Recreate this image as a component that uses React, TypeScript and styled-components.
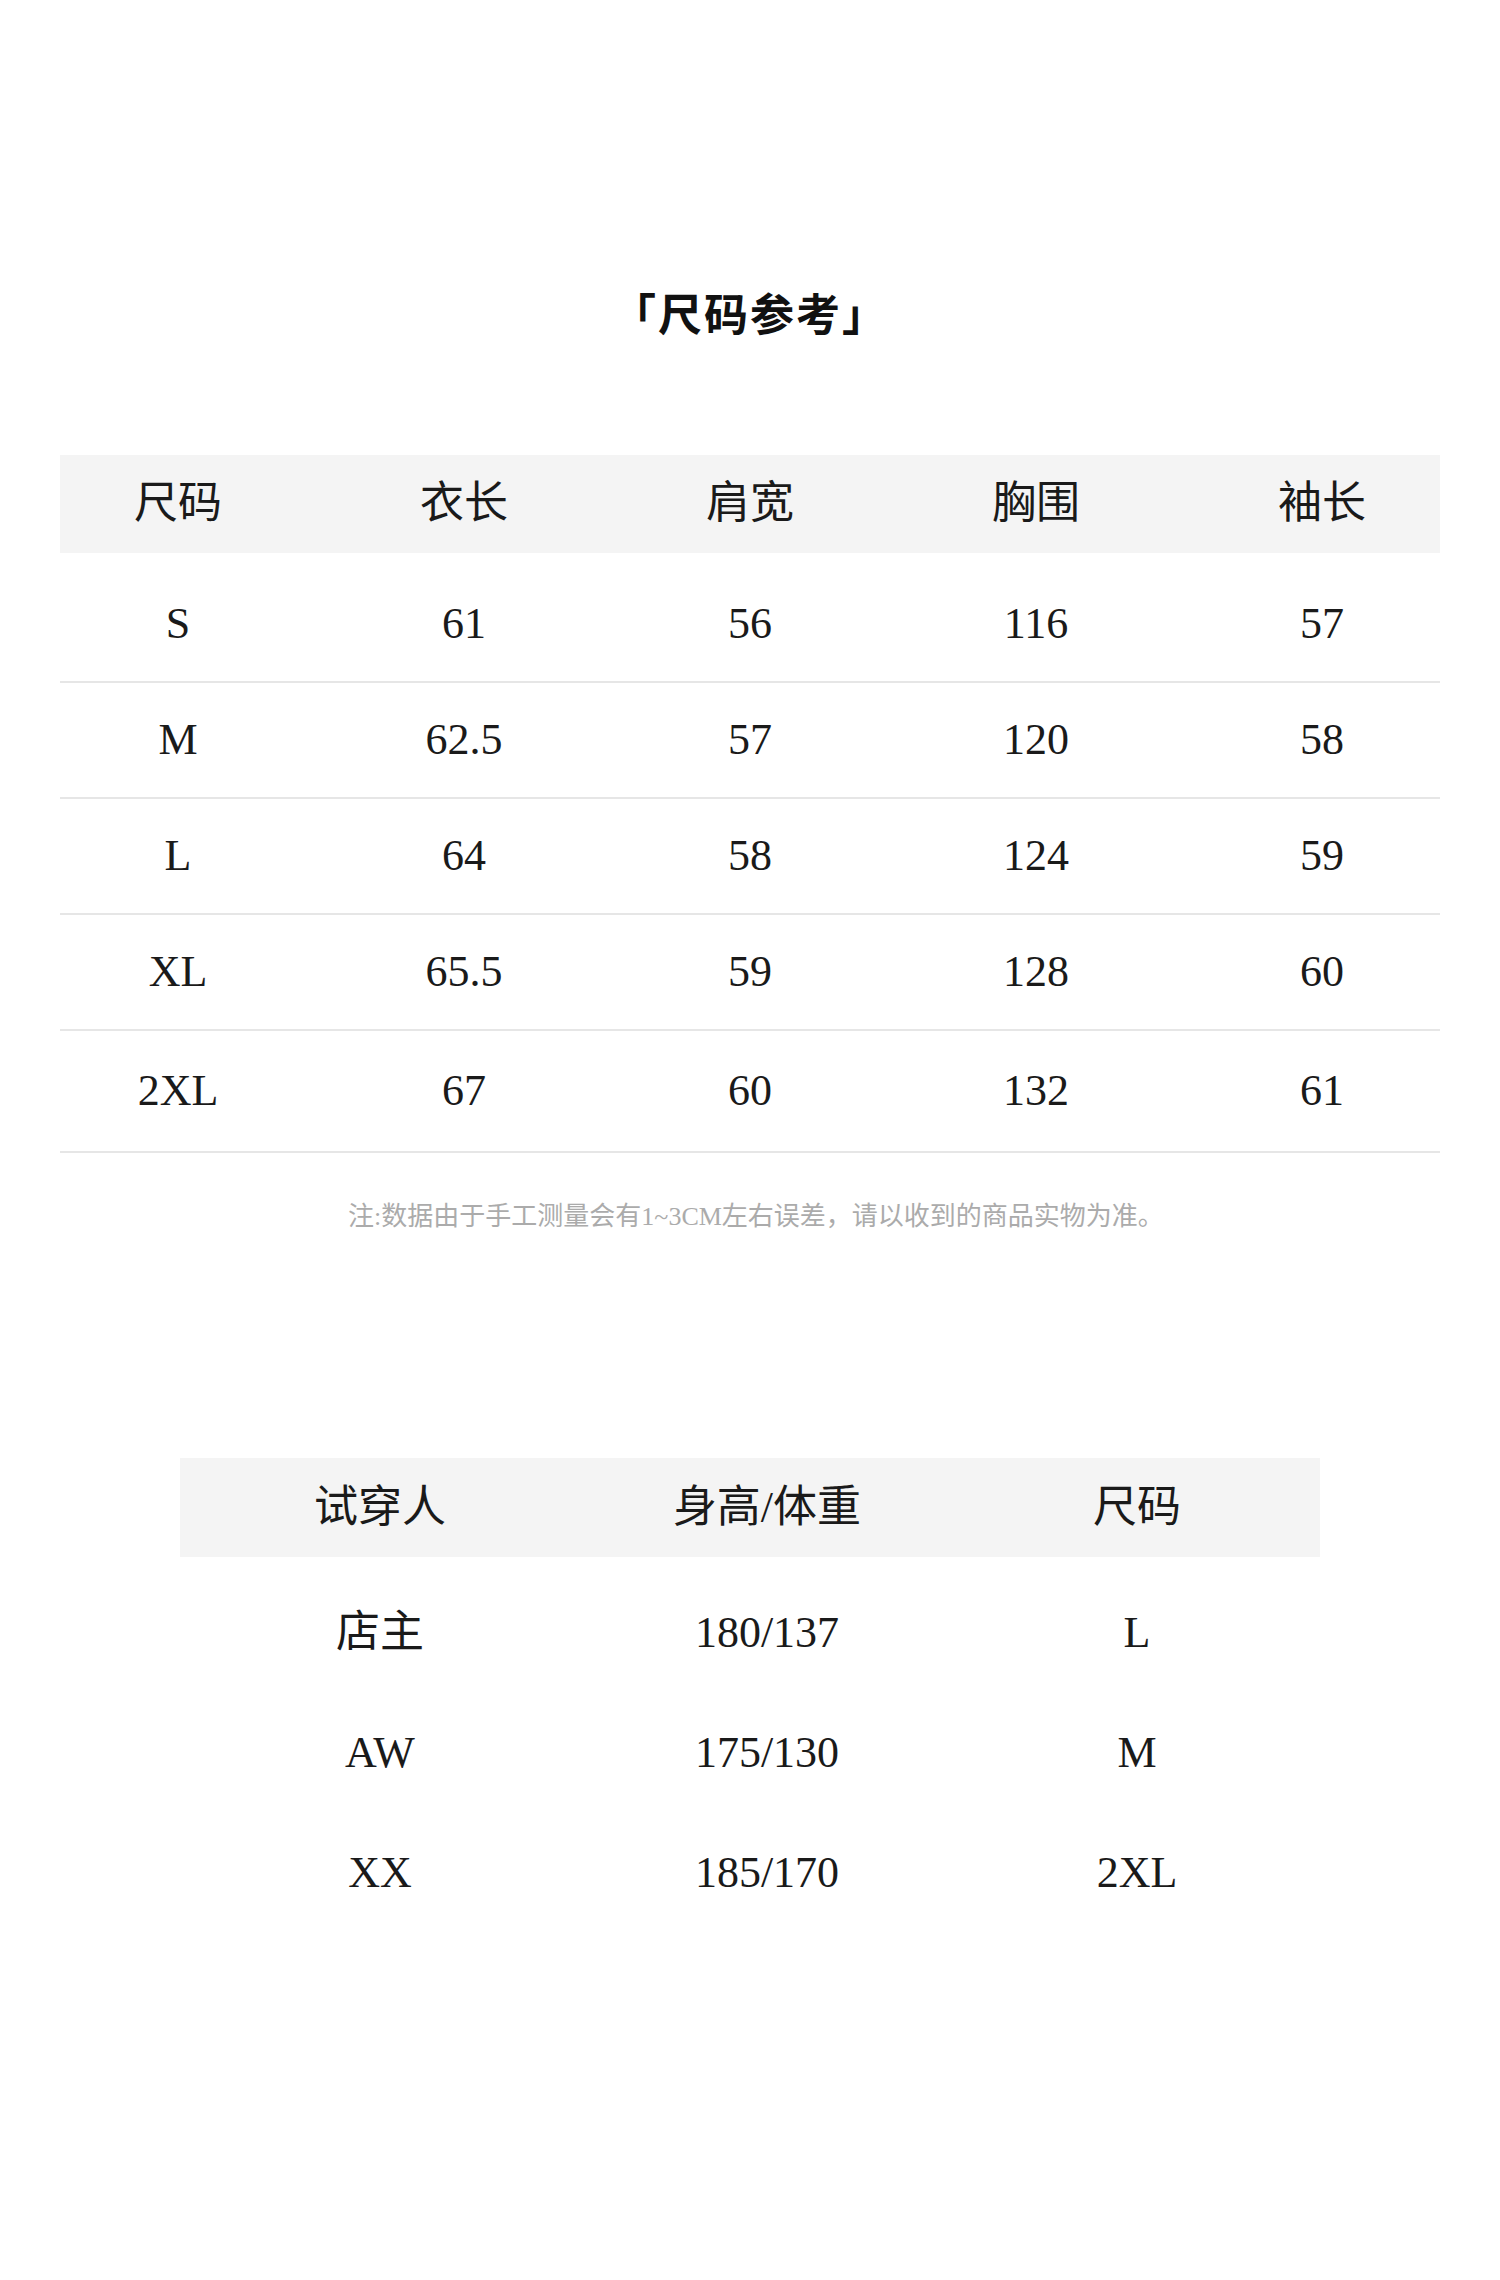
import React from "react";
import styled, { createGlobalStyle } from "styled-components";

const GlobalStyle = createGlobalStyle`
	html, body {
		margin: 0;
		padding: 0;
		background: #ffffff;
	}
	body {
		font-family: "Liberation Serif", "Noto Sans CJK SC", serif;
		color: #1a1a1a;
	}
`;

const sizeHeads = ["尺码", "衣长", "肩宽", "胸围", "袖长"];
const sizeRows = [
	["S", "61", "56", "116", "57"],
	["M", "62.5", "57", "120", "58"],
	["L", "64", "58", "124", "59"],
	["XL", "65.5", "59", "128", "60"],
	["2XL", "67", "60", "132", "61"],
];

const fitHeads = ["试穿人", "身高/体重", "尺码"];
const fitRows = [
	["店主", "180/137", "L"],
	["AW", "175/130", "M"],
	["XX", "185/170", "2XL"],
];

const App = () => {
	return (
		<>
			<GlobalStyle />
			<Page>
				<Title>「尺码参考」</Title>

				<SizeTable>
					<HeadBand>
						<SizeGrid>
							{sizeHeads.map((h) => (
								<Cell key={h}>{h}</Cell>
							))}
						</SizeGrid>
					</HeadBand>
					<SizeBody>
						{sizeRows.map((row, i) => (
							<SizeRow key={row[0]} last={i === sizeRows.length - 1}>
								<SizeGrid>
									{row.map((v, j) => (
										<Cell key={j}>{v}</Cell>
									))}
								</SizeGrid>
							</SizeRow>
						))}
					</SizeBody>
				</SizeTable>

				<Note>注:数据由于手工测量会有1~3CM左右误差，请以收到的商品实物为准。</Note>

				<FitTable>
					<FitHead>
						{fitHeads.map((h) => (
							<Cell key={h}>{h}</Cell>
						))}
					</FitHead>
					<FitBody>
						{fitRows.map((row) => (
							<FitRow key={row[0]}>
								{row.map((v, j) => (
									<Cell key={j}>{v}</Cell>
								))}
							</FitRow>
						))}
					</FitBody>
				</FitTable>
			</Page>
		</>
	);
};

export default App;

const Page = styled.div`
	width: 1500px;
	height: 2280px;
	padding-top: 282px;
	box-sizing: border-box;
	display: flex;
	flex-direction: column;
	align-items: center;
`;

const Title = styled.h1`
	margin: 0;
	font-family: "Noto Sans CJK SC", sans-serif;
	font-size: 44px;
	font-weight: 700;
	line-height: 60px;
	color: #111;
	letter-spacing: 2px;
`;

const SizeTable = styled.div`
	margin-top: 113px;
	width: 1380px;
`;

const HeadBand = styled.div`
	height: 98px;
	background: #f4f4f4;
	display: flex;
	align-items: center;
`;

const SizeGrid = styled.div`
	flex: 1;
	margin: 0 -25px;
	display: grid;
	grid-template-columns: repeat(5, 1fr);
	align-items: center;
`;

const SizeBody = styled.div`
	padding-top: 14px;
`;

const SizeRow = styled.div<{ last?: boolean }>`
	height: ${(p) => (p.last ? 122 : 116)}px;
	box-sizing: border-box;
	border-bottom: 2px solid #e6e6e6;
	display: flex;
	align-items: center;
`;

const Cell = styled.div`
	text-align: center;
	font-size: 44px;
	line-height: 56px;
	color: #1a1a1a;
	white-space: nowrap;
`;

const Note = styled.p`
	margin: 46px 0 0;
	padding-left: 12px;
	font-size: 26px;
	line-height: 36px;
	color: #ababab;
	white-space: nowrap;
`;

const FitTable = styled.div`
	margin-top: 223px;
	width: 1140px;
`;

const FitHead = styled.div`
	height: 99px;
	background: #f4f4f4;
	display: grid;
	grid-template-columns: 400px 374px 1fr;
	align-items: center;
`;

const FitBody = styled.div`
	padding-top: 16px;
`;

const FitRow = styled.div`
	height: 120px;
	display: grid;
	grid-template-columns: 400px 374px 1fr;
	align-items: center;
`;
